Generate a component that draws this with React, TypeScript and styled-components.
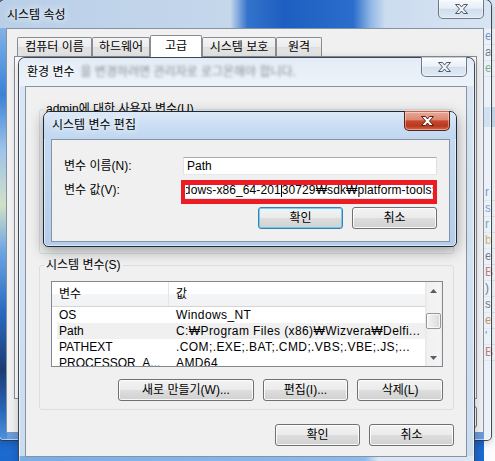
import React from 'react';
import styled, { createGlobalStyle, css } from 'styled-components';

const FONT = `"Liberation Sans", "Noto Sans CJK KR", sans-serif`;

const GlobalStyle = createGlobalStyle`
  *, *::before, *::after { box-sizing: border-box; }
  html, body { margin: 0; padding: 0; }
  body { font-family: ${FONT}; font-size: 12px; color: #000; background: #1e6fd3; }
`;

const Desktop = styled.div`
  position: relative;
  width: 495px;
  height: 461px;
  overflow: hidden;
  background: linear-gradient(180deg, #6aaaea 0%, #2b7ad8 70%, #1b68cf 100%);
`;

/* ---------- another application peeking out on the right ---------- */
const BackApp = styled.div`
  position: absolute;
  left: 484px;
  top: 0;
  width: 11px;
  height: 461px;
  display: flex;
  flex-direction: column;
  background: #fbfcfe;
`;
const BackBand = styled.div<{ $h: number; $bg: string }>`
  flex: none;
  height: ${p => p.$h}px;
  background: ${p => p.$bg};
`;
const BackLine = styled.div<{ $color: string }>`
  flex: none;
  height: 16px;
  padding-left: 1px;
  border-bottom: 1px solid #e6eaef;
  font: 12px/15px ${FONT};
  color: ${p => p.$color};
  white-space: nowrap;
  overflow: hidden;
`;

/* ---------- window chrome ---------- */
type Geo = { $x: number; $y: number; $w: number; $h: number; $active?: boolean };

const Window = styled.section<Geo>`
  position: absolute;
  left: ${p => p.$x}px;
  top: ${p => p.$y}px;
  width: ${p => p.$w}px;
  height: ${p => p.$h}px;
  display: flex;
  flex-direction: column;
  border: 1px solid ${p => (p.$active ? '#1c2a3a' : 'rgba(34, 44, 58, 0.85)')};
  border-radius: 7px 7px 5px 5px;
  box-shadow: inset 0 0 0 1px rgba(255, 255, 255, 0.55)
    ${p => (p.$active ? ', 0 4px 14px rgba(0, 0, 0, 0.35)' : ', 0 2px 8px rgba(0, 0, 0, 0.2)')};
`;

const SysWindow = styled(Window)`
  background:
    linear-gradient(180deg, #a9c6e6 0px, #6ea6e3 45px, #3b82d6 95px, #9fc3ea 150px, #d2e0c6 205px,
      #6fa6e2 250px, #2c6bc2 310px, #1c3c72 370px, #2a66b8 410px, #4d92df 440px) left top / 8px 100% no-repeat,
    rgba(212, 226, 242, 0.4);
`;

const EnvWindow = styled(Window)`
  background:
    linear-gradient(90deg, #78aee6 0%, #8dbbea 76%, #dce7f3 79%) left bottom / 100% 8px no-repeat,
    linear-gradient(180deg, #dae6f3 0%, #cbdcee 100%);
`;

const EditWindow = styled(Window)`
  background: linear-gradient(180deg, #c9ddf3 0%, #b4cdea 100%);
`;

const TitleBar = styled.header<{ $h: number; $pr: number }>`
  flex: none;
  height: ${p => p.$h}px;
  display: flex;
  align-items: flex-start;
  padding: 0 ${p => p.$pr}px 0 8px;
  border-radius: 6px 6px 0 0;
`;

const SysTitleBar = styled(TitleBar)`
  background: linear-gradient(90deg, #b9cfe8 0%, #c5d7eb 47%, #3473cc 50.5%, #1d5fc0 58%, #2a6dcb 72%,
    #8fb6e4 75.5%, #cbdcef 78.5%, #d8e4f2 100%);
`;
const EnvTitleBar = styled(TitleBar)`
  background: linear-gradient(180deg, #e3ecf6 0%, #edf3f9 100%);
`;
const EditTitleBar = styled(TitleBar)`
  background: linear-gradient(180deg, #dde9f7 0%, #c9ddf3 55%, #c0d7f0 100%);
`;

const WindowTitle = styled.h1<{ $top: number }>`
  flex: none;
  margin: ${p => p.$top}px 0 0;
  font: 400 12px/14px ${FONT};
  color: #000;
  white-space: nowrap;
  text-shadow: 0 0 6px rgba(255, 255, 255, 0.95), 0 0 10px rgba(255, 255, 255, 0.8);
`;

const GlassGhost = styled.span`
  flex: none;
  margin: 7px 0 0 6px;
  font: 12px/14px ${FONT};
  color: rgba(40, 40, 40, 0.5);
  white-space: nowrap;
  filter: blur(1.4px);
`;

const CloseButton = styled.button<{ $active?: boolean }>`
  flex: none;
  margin: -1px 0 0 auto;
  width: 46px;
  height: 20px;
  padding: 0;
  display: flex;
  align-items: center;
  justify-content: center;
  border: 1px solid ${p => (p.$active ? '#5e1f15' : 'rgba(58, 68, 84, 0.7)')};
  border-top-color: transparent;
  border-radius: 0 0 5px 5px;
  background: ${p =>
    p.$active
      ? 'linear-gradient(180deg, #e9a898 0%, #dc8a76 42%, #c8482c 50%, #b8381f 78%, #d46a4d 100%)'
      : 'linear-gradient(180deg, rgba(255,255,255,0.8) 0%, rgba(236,242,249,0.75) 45%, rgba(206,219,234,0.75) 52%, rgba(222,232,243,0.85) 100%)'};
  box-shadow: inset 0 0 0 1px rgba(255, 255, 255, 0.4);
`;

const CloseGlyph = ({ active }: { active?: boolean }) => (
  <svg width="15" height="12" viewBox="0 0 15 12">
    <path
      d="M1.5 1.5h4l2 2.5 2-2.5h4l-4 4.5 4 4.5h-4l-2-2.5-2 2.5h-4l4-4.5z"
      fill={active ? '#ffffff' : '#eef1f5'}
      stroke={active ? '#5a1a10' : '#4f5a68'}
      strokeWidth="1"
      strokeLinejoin="round"
    />
  </svg>
);

const WindowBody = styled.div<{ $pl: number; $pr: number; $pb: number }>`
  flex: 1;
  min-height: 0;
  display: flex;
  padding: 0 ${p => p.$pr}px ${p => p.$pb}px ${p => p.$pl}px;
`;

const ClientArea = styled.div`
  flex: 1;
  min-width: 0;
  display: flex;
  flex-direction: column;
  background: #f0f0f0;
  border: 1px solid #8493a6;
`;

/* ---------- common controls ---------- */
const PushButton = styled.button<{ $w: number; $default?: boolean }>`
  flex: none;
  width: ${p => p.$w}px;
  height: 22px;
  padding: 0;
  font: 12px/14px ${FONT};
  color: #000;
  white-space: nowrap;
  border: 1px solid ${p => (p.$default ? '#3c7fb1' : '#707070')};
  border-radius: 3px;
  background: linear-gradient(180deg, #f3f3f3 0%, #ebebeb 48%, #dddddd 52%, #d1d1d1 100%);
  box-shadow: inset 0 0 0 1px ${p => (p.$default ? 'rgba(80, 200, 240, 0.8)' : 'rgba(255, 255, 255, 0.85)')};
`;

const ButtonRow = styled.div<{ $gap: number; $top: number }>`
  flex: none;
  display: flex;
  justify-content: flex-end;
  gap: ${p => p.$gap}px;
  margin-top: ${p => p.$top}px;
`;

/* ---------- 시스템 속성 ---------- */
const SysClient = styled(ClientArea)`
  padding: 6px 6px 4px 7px;
`;
const TabStrip = styled.div`
  flex: none;
  height: 21px;
  display: flex;
  align-items: flex-end;
  padding-left: 3px;
`;
const Tab = styled.div<{ $w: number; $selected?: boolean }>`
  flex: none;
  position: relative;
  width: ${p => p.$w}px;
  display: flex;
  align-items: center;
  justify-content: center;
  border: 1px solid #898c95;
  border-bottom: none;
  border-radius: 2px 2px 0 0;
  font: 12px/14px ${FONT};
  white-space: nowrap;
  ${p =>
    p.$selected
      ? css`
          height: 22px;
          margin-bottom: -1px;
          padding-bottom: 2px;
          z-index: 1;
          background: #fff;
        `
      : css`
          height: 19px;
          background: linear-gradient(180deg, #f4f4f4 0%, #ececec 48%, #dfdfdf 52%, #e7e7e7 100%);
        `}
`;
const TabPanel = styled.div`
  flex: 1;
  border: 1px solid #898c95;
  background: #fff;
`;

/* ---------- 환경 변수 ---------- */
const EnvClient = styled(ClientArea)`
  padding: 15px 12px 10px 13px;
`;
const GroupStack = styled.div`
  display: flex;
  flex-direction: column;
  gap: 4px;
`;
const GroupBox = styled.fieldset`
  margin: 0;
  padding: 0;
  min-width: 0;
  border: 1px solid #d5dfe5;
  border-radius: 3px;
`;
const GroupLegend = styled.legend`
  margin-left: 4px;
  padding: 0 2px;
  font: 12px/14px ${FONT};
  white-space: nowrap;
`;
const GroupContent = styled.div`
  display: flex;
  flex-direction: column;
  padding: 9px 10px 8px 11px;
`;

const ListView = styled.div`
  flex: none;
  height: 86px;
  display: flex;
  border: 1px solid #828790;
  background: #fff;
`;
const ListMain = styled.div`
  flex: 1;
  min-width: 0;
  display: flex;
  flex-direction: column;
  overflow: hidden;
`;
const ListHeader = styled.div`
  flex: none;
  height: 25px;
  display: flex;
  border-bottom: 1px solid #d5d5d5;
  background: linear-gradient(180deg, #ffffff 0%, #ffffff 48%, #f4f5f7 52%, #f1f2f4 100%);
`;
const HeaderCell = styled.div<{ $w?: number }>`
  display: flex;
  align-items: center;
  padding-left: 7px;
  font: 12px/14px ${FONT};
  ${p =>
    p.$w
      ? css`
          flex: none;
          width: ${p.$w}px;
          border-right: 1px solid #e2e5e9;
        `
      : css`
          flex: 1;
        `}
`;
const ListRow = styled.div<{ $selected?: boolean }>`
  flex: none;
  height: 16px;
  margin-left: 5px;
  display: flex;
  align-items: center;
  background: ${p => (p.$selected ? '#f0f0f0' : 'transparent')};
  font: 12px/16px ${FONT};
  white-space: nowrap;
`;
const RowName = styled.span`
  flex: none;
  width: 111px;
  padding-left: 2px;
  overflow: hidden;
`;
const RowValue = styled.span`
  flex: 1;
  min-width: 0;
  padding-left: 8px;
  overflow: hidden;
  letter-spacing: 0.4px;
`;

const ScrollBar = styled.div`
  flex: none;
  width: 17px;
  display: flex;
  flex-direction: column;
  background: linear-gradient(90deg, #e6e6e6 0%, #f1f1f1 15%, #f4f4f4 85%, #ebebeb 100%);
`;
const ScrollArrow = styled.div`
  flex: none;
  height: 17px;
  display: flex;
  align-items: center;
  justify-content: center;
`;
const ScrollTrack = styled.div<{ $offset: number }>`
  flex: 1;
  padding-top: ${p => p.$offset}px;
  display: flex;
  flex-direction: column;
  align-items: center;
`;
const ScrollThumb = styled.div`
  width: 15px;
  height: 16px;
  border: 1px solid #979797;
  border-radius: 2px;
  background: linear-gradient(90deg, #f4f4f4 0%, #e8e8e8 50%, #dadada 100%);
  box-shadow: inset 0 0 0 1px rgba(255, 255, 255, 0.7);
`;

const ArrowGlyph = ({ up }: { up?: boolean }) => (
  <svg width="7" height="4" viewBox="0 0 7 4">
    <polygon points={up ? '0,4 3.5,0 7,4' : '0,0 7,0 3.5,4'} fill="#5c5c5c" />
  </svg>
);

type VarRow = { name: string; value: string; selected?: boolean };

const VarList = ({ rows, thumb }: { rows: VarRow[]; thumb: number }) => (
  <ListView>
    <ListMain>
      <ListHeader>
        <HeaderCell $w={117}>변수</HeaderCell>
        <HeaderCell>값</HeaderCell>
      </ListHeader>
      {rows.map(r => (
        <ListRow key={r.name} $selected={r.selected}>
          <RowName>{r.name}</RowName>
          <RowValue>{r.value}</RowValue>
        </ListRow>
      ))}
    </ListMain>
    <ScrollBar>
      <ScrollArrow>
        <ArrowGlyph up />
      </ScrollArrow>
      <ScrollTrack $offset={thumb}>
        <ScrollThumb />
      </ScrollTrack>
      <ScrollArrow>
        <ArrowGlyph />
      </ScrollArrow>
    </ScrollBar>
  </ListView>
);

/* ---------- 시스템 변수 편집 ---------- */
const EditClient = styled(ClientArea)`
  padding: 17px 12px 12px 12px;
`;
const FieldGrid = styled.div`
  display: grid;
  grid-template-columns: 119px minmax(0, 1fr);
  grid-template-rows: 18px 18px;
  row-gap: 6px;
  align-items: center;
`;
const FieldLabel = styled.label`
  font: 12px/14px ${FONT};
  white-space: nowrap;
`;
const TextBox = styled.div`
  min-width: 0;
  height: 18px;
  display: flex;
  align-items: center;
  padding: 0 3px;
  border: 1px solid;
  border-color: #abadb3 #dbdfe6 #e3e9ef #e2e3ea;
  background: #fff;
  font: 12px/14px ${FONT};
  white-space: nowrap;
  overflow: hidden;
`;
const ValueBox = styled(TextBox)`
  position: relative;
  overflow: visible;
  padding: 0 1px 0 2px;
`;
const ValueClip = styled.div`
  flex: 1;
  min-width: 0;
  display: flex;
  align-items: center;
  justify-content: flex-end;
  overflow: hidden;
  letter-spacing: 0.1px;
`;
const ValueText = styled.span`
  flex: none;
`;
const Caret = styled.span`
  flex: none;
  width: 1px;
  height: 13px;
  background: #000;
`;
const Highlight = styled.div`
  position: absolute;
  left: -3px;
  right: -1px;
  top: -2px;
  bottom: -6px;
  border-style: solid;
  border-color: #ed1c24;
  border-width: 5px 4px;
  pointer-events: none;
`;

const systemVars: VarRow[] = [
  { name: 'OS', value: 'Windows_NT' },
  { name: 'Path', value: 'C:₩Program Files (x86)₩Wizvera₩Delfi...', selected: true },
  { name: 'PATHEXT', value: '.COM;.EXE;.BAT;.CMD;.VBS;.VBE;.JS;...' },
  { name: 'PROCESSOR_A...', value: 'AMD64' },
  { name: 'PROCESSOR_I...', value: 'Intel64 Family 6 Model 42' },
];

const userVars: VarRow[] = [
  { name: 'TEMP', value: '%USERPROFILE%₩AppData₩Local₩Temp' },
  { name: 'TMP', value: '%USERPROFILE%₩AppData₩Local₩Temp' },
];

const sysTabs = [
  { label: '컴퓨터 이름', w: 75 },
  { label: '하드웨어', w: 58 },
  { label: '고급', w: 52, selected: true },
  { label: '시스템 보호', w: 74 },
  { label: '원격', w: 46 },
];

const backLines = [
  { ch: 'r', color: '#3a6fc0' },
  { ch: 's', color: '#3a6fc0' },
  { ch: 'r', color: '#1a8a8a' },
  { ch: 'b', color: '#d08a10' },
  { ch: 'e', color: '#333333' },
  { ch: 'B', color: '#c0392b' },
  { ch: ')', color: '#333333' },
  { ch: 's', color: '#333333' },
  { ch: 'e', color: '#b05a00' },
  { ch: "'", color: '#2a62b5' },
  { ch: 'B', color: '#c0392b' },
];

export default function App() {
  return (
    <>
      <GlobalStyle />
      <Desktop>
        <BackApp>
          <BackBand $h={29} $bg="#e2ebf5" />
          <BackLine $color="#2a62b5">e</BackLine>
          <BackLine $color="#333333">a</BackLine>
          <BackLine $color="#3a8a3a">e</BackLine>
          <BackBand $h={30} $bg="#fbfcfe" />
          <BackBand $h={20} $bg="#cfe0f4" />
          <BackBand $h={58} $bg="#fbfcfe" />
          {backLines.map((l, i) => (
            <BackLine key={i} $color={l.color}>
              {l.ch}
            </BackLine>
          ))}
        </BackApp>

        <SysWindow $x={-2} $y={-1} $w={494} $h={442}>
          <SysTitleBar $h={28} $pr={7}>
            <WindowTitle $top={8}>시스템 속성</WindowTitle>
            <CloseButton aria-label="닫기">
              <CloseGlyph />
            </CloseButton>
          </SysTitleBar>
          <WindowBody $pl={7} $pr={7} $pb={7}>
            <SysClient>
              <TabStrip>
                {sysTabs.map(t => (
                  <Tab key={t.label} $w={t.w} $selected={t.selected}>
                    {t.label}
                  </Tab>
                ))}
              </TabStrip>
              <TabPanel />
              <ButtonRow $gap={6} $top={7}>
                <PushButton $w={75}>확인</PushButton>
                <PushButton $w={75}>취소</PushButton>
                <PushButton $w={75}>적용(A)</PushButton>
              </ButtonRow>
            </SysClient>
          </WindowBody>
        </SysWindow>

        <EnvWindow $x={18} $y={57} $w={457} $h={408}>
          <EnvTitleBar $h={28} $pr={7}>
            <WindowTitle $top={7}>환경 변수</WindowTitle>
            <GlassGhost>을 변경하려면 관리자로 로그온해야 합니다.</GlassGhost>
            <CloseButton aria-label="닫기">
              <CloseGlyph />
            </CloseButton>
          </EnvTitleBar>
          <WindowBody $pl={6} $pr={7} $pb={7}>
            <EnvClient>
              <GroupStack>
                <GroupBox>
                  <GroupLegend>admin에 대한 사용자 변수(U)</GroupLegend>
                  <GroupContent>
                    <VarList rows={userVars} thumb={0} />
                    <ButtonRow $gap={9} $top={12}>
                      <PushButton $w={136}>새로 만들기(N)...</PushButton>
                      <PushButton $w={85}>편집(E)...</PushButton>
                      <PushButton $w={86}>삭제(D)</PushButton>
                    </ButtonRow>
                  </GroupContent>
                </GroupBox>
                <GroupBox>
                  <GroupLegend>시스템 변수(S)</GroupLegend>
                  <GroupContent>
                    <VarList rows={systemVars} thumb={14} />
                    <ButtonRow $gap={9} $top={12}>
                      <PushButton $w={136}>새로 만들기(W)...</PushButton>
                      <PushButton $w={85}>편집(I)...</PushButton>
                      <PushButton $w={86}>삭제(L)</PushButton>
                    </ButtonRow>
                  </GroupContent>
                </GroupBox>
              </GroupStack>
              <ButtonRow $gap={9} $top={14}>
                <PushButton $w={85}>확인</PushButton>
                <PushButton $w={85}>취소</PushButton>
              </ButtonRow>
            </EnvClient>
          </WindowBody>
        </EnvWindow>

        <EditWindow $x={43} $y={111} $w={414} $h={136} $active>
          <EditTitleBar $h={27} $pr={6}>
            <WindowTitle $top={6}>시스템 변수 편집</WindowTitle>
            <CloseButton $active aria-label="닫기">
              <CloseGlyph active />
            </CloseButton>
          </EditTitleBar>
          <WindowBody $pl={7} $pr={6} $pb={4}>
            <EditClient>
              <FieldGrid>
                <FieldLabel>변수 이름(N):</FieldLabel>
                <TextBox>Path</TextBox>
                <FieldLabel>변수 값(V):</FieldLabel>
                <ValueBox>
                  <ValueClip>
                    <ValueText>C:₩adt-bundle-windows-x86_64-201</ValueText>
                    <Caret />
                    <ValueText>30729₩sdk₩platform-tools;</ValueText>
                  </ValueClip>
                  <Highlight />
                </ValueBox>
              </FieldGrid>
              <ButtonRow $gap={9} $top={8}>
                <PushButton $w={85} $default>
                  확인
                </PushButton>
                <PushButton $w={85}>취소</PushButton>
              </ButtonRow>
            </EditClient>
          </WindowBody>
        </EditWindow>
      </Desktop>
    </>
  );
}
